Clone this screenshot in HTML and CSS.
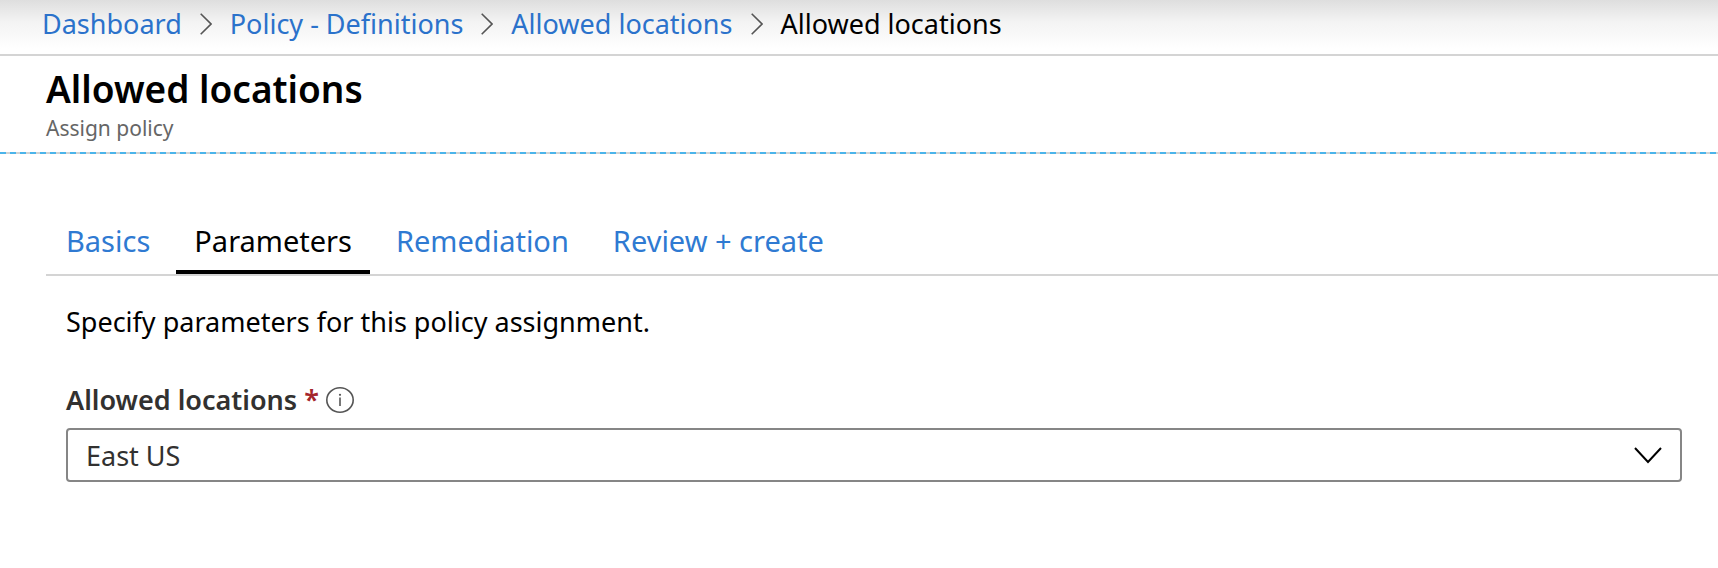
FILE: index.html
```html
<!DOCTYPE html>
<html lang="en">
<head>
<meta charset="utf-8">
<meta name="viewport" content="width=device-width, initial-scale=1">
<title>Allowed locations - Assign policy</title>
<link rel="stylesheet" href="styles.css">
</head>
<body>
<nav class="breadcrumb" aria-label="Breadcrumb">
  <a href="#">Dashboard</a>
  <svg class="crumb-sep" viewBox="0 0 12 22" aria-hidden="true"><path d="M0.7 0.7 11 11 0.7 21.3"/></svg>
  <a href="#">Policy - Definitions</a>
  <svg class="crumb-sep" viewBox="0 0 12 22" aria-hidden="true"><path d="M0.7 0.7 11 11 0.7 21.3"/></svg>
  <a href="#">Allowed locations</a>
  <svg class="crumb-sep" viewBox="0 0 12 22" aria-hidden="true"><path d="M0.7 0.7 11 11 0.7 21.3"/></svg>
  <span aria-current="page">Allowed locations</span>
</nav>
<header class="blade-header">
  <h1 class="blade-title">Allowed locations</h1>
  <p class="blade-subtitle">Assign policy</p>
</header>
<main class="blade-body">
  <div class="tabs" role="tablist">
    <button class="tab" type="button" role="tab" aria-selected="false">Basics</button>
    <button class="tab tab-active" type="button" role="tab" aria-selected="true">Parameters</button>
    <button class="tab" type="button" role="tab" aria-selected="false">Remediation</button>
    <button class="tab" type="button" role="tab" aria-selected="false">Review + create</button>
  </div>
  <section class="panel">
    <p class="intro">Specify parameters for this policy assignment.</p>
    <div class="field-label">
      <label for="locations">Allowed locations</label>
      <span class="required">*</span>
      <svg class="info" viewBox="0 0 28 26" aria-hidden="true"><ellipse cx="14" cy="13" rx="13.2" ry="12.2"/><path d="M14 10.500V19"/><circle cx="14" cy="7.800" r="1.100"/></svg>
    </div>
    <div class="dropdown">
      <select id="locations" class="dropdown-select"><option>East US</option></select>
      <svg class="chevron" viewBox="0 0 28 17" aria-hidden="true"><path d="M1 1 14 15 27 1"/></svg>
    </div>
  </section>
</main>
</body>
</html>
```
FILE: styles.css
```css
* {
  box-sizing: border-box;
}

body {
  margin: 0;
  background: #fff;
  color: #000;
  font-family: "Segoe UI", "Noto Sans", sans-serif;
  font-size: 27px;
  line-height: 36px;
}

.breadcrumb {
  display: flex;
  align-items: center;
  gap: 18px;
  padding: 6px 42px 12px;
  border-bottom: 2px solid #d4d4d4;
  background: linear-gradient(#dedede, #f3f3f3 40%, #fff 90%);
}

.breadcrumb a {
  color: #2b72cb;
  text-decoration: none;
}

.crumb-sep {
  width: 12px;
  height: 22px;
  fill: none;
  stroke: #555;
  stroke-width: 1.6;
}

.blade-header {
  padding: 10px 46px 12px;
  background: repeating-linear-gradient(90deg, #4bb4ea 0 6px, #d2d2d2 6px 10px) left bottom / 100% 2px no-repeat;
}

.blade-title {
  margin: 0 0 2px;
  font-size: 37px;
  font-weight: 600;
  line-height: 46px;
}

.blade-subtitle {
  margin: 0;
  color: #666;
  font-size: 21px;
  line-height: 28px;
}

.blade-body {
  padding: 66px 0 0 46px;
}

.tabs {
  display: flex;
  gap: 8px;
  padding-left: 2px;
  border-bottom: 2px solid #d4d4d4;
}

.tab {
  padding: 3px 18px 11px;
  border: 0;
  border-bottom: 4px solid transparent;
  background: none;
  color: #2f7ad2;
  font: inherit;
  font-size: 29px;
}

.tab-active {
  border-bottom-color: #000;
  color: #000;
}

.panel {
  padding: 28px 36px 0 20px;
}

.intro {
  margin: 0 0 42px;
}

.field-label {
  display: flex;
  align-items: center;
  gap: 7px;
  margin-bottom: 10px;
  color: #323130;
  font-weight: 600;
}

.required {
  color: #a4262c;
}

.info {
  width: 28px;
  height: 26px;
  fill: none;
  stroke: #555;
  stroke-width: 1.6;
}

.info circle {
  fill: #555;
  stroke: none;
}

.dropdown {
  display: grid;
  align-items: center;
}

.dropdown-select {
  grid-area: 1 / 1;
  width: 100%;
  padding: 8px 18px 6px;
  border: 2px solid #868686;
  border-radius: 4px;
  appearance: none;
  background: #fff;
  color: #323130;
  font: inherit;
}

.chevron {
  grid-area: 1 / 1;
  justify-self: end;
  width: 28px;
  height: 17px;
  margin-right: 20px;
  fill: none;
  stroke: #000;
  stroke-width: 2;
  pointer-events: none;
}
```
